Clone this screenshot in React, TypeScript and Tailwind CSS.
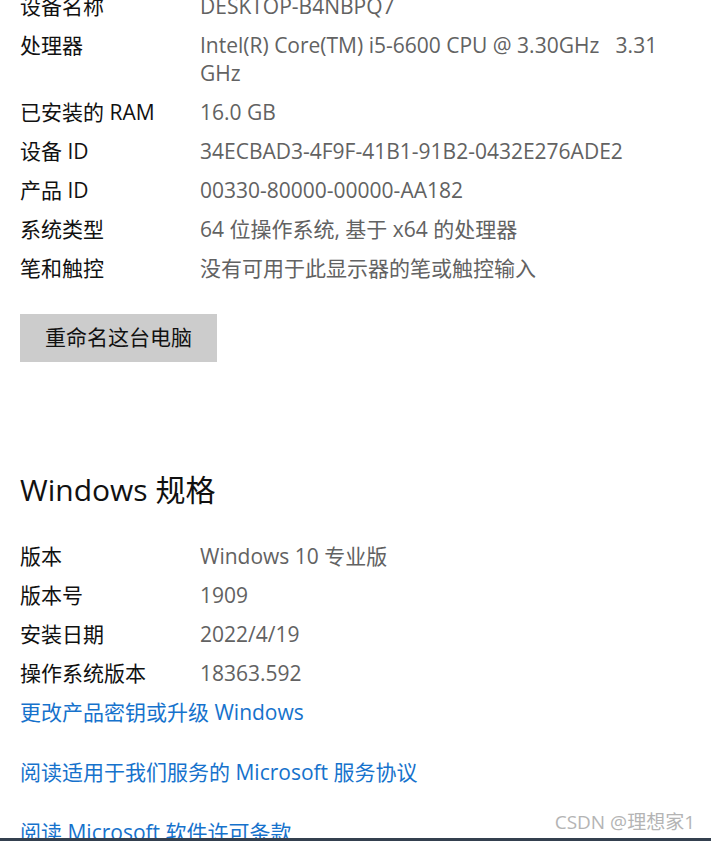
const font = { fontFamily: '"Open Sans", "Noto Sans CJK SC", sans-serif' };

const deviceRows: [string, string][] = [
  ['设备名称', 'DESKTOP-B4NBPQ7'],
  ['处理器', 'Intel(R) Core(TM) i5-6600 CPU @ 3.30GHz   3.31\nGHz'],
  ['已安装的 RAM', '16.0 GB'],
  ['设备 ID', '34ECBAD3-4F9F-41B1-91B2-0432E276ADE2'],
  ['产品 ID', '00330-80000-00000-AA182'],
  ['系统类型', '64 位操作系统, 基于 x64 的处理器'],
  ['笔和触控', '没有可用于此显示器的笔或触控输入'],
];

const windowsRows: [string, string][] = [
  ['版本', 'Windows 10 专业版'],
  ['版本号', '1909'],
  ['安装日期', '2022/4/19'],
  ['操作系统版本', '18363.592'],
];

function InfoRows({ rows }: { rows: [string, string][] }) {
  return (
    <div className="flex flex-col gap-[11px]">
      {rows.map(([label, value]) => (
        <div key={label} className="grid grid-cols-[180px_1fr] text-[21px] leading-[28px]">
          <span className="text-[#111111]">{label}</span>
          <span className="text-[#626262] whitespace-pre">{value}</span>
        </div>
      ))}
    </div>
  );
}

export default function App() {
  return (
    <div className="relative w-[711px] h-[841px] overflow-hidden bg-white" style={font}>
      <div className="pl-5 -mt-[8px]">
        <InfoRows rows={deviceRows} />

        <button className="mt-8 w-[197px] h-12 bg-[#cccccc] text-[21px] text-[#111111]">
          重命名这台电脑
        </button>

        <h2 className="mt-[108px] text-[30px] leading-10 text-[#111111]">Windows 规格</h2>

        <div className="mt-8">
          <InfoRows rows={windowsRows} />
        </div>

        <div className="mt-[11px] flex flex-col gap-8 text-[21px] leading-[28px] text-[#1672cc]">
          <a>更改产品密钥或升级 Windows</a>
          <a>阅读适用于我们服务的 Microsoft 服务协议</a>
          <a>阅读 Microsoft 软件许可条款</a>
        </div>
      </div>

      <div className="absolute right-[16px] bottom-[7px] text-[19px] leading-6 text-[#b4b4b4]">
        CSDN @理想家1
      </div>
      <div className="absolute left-0 right-0 bottom-0 h-[3px] bg-[#34404f]" />
    </div>
  );
}
